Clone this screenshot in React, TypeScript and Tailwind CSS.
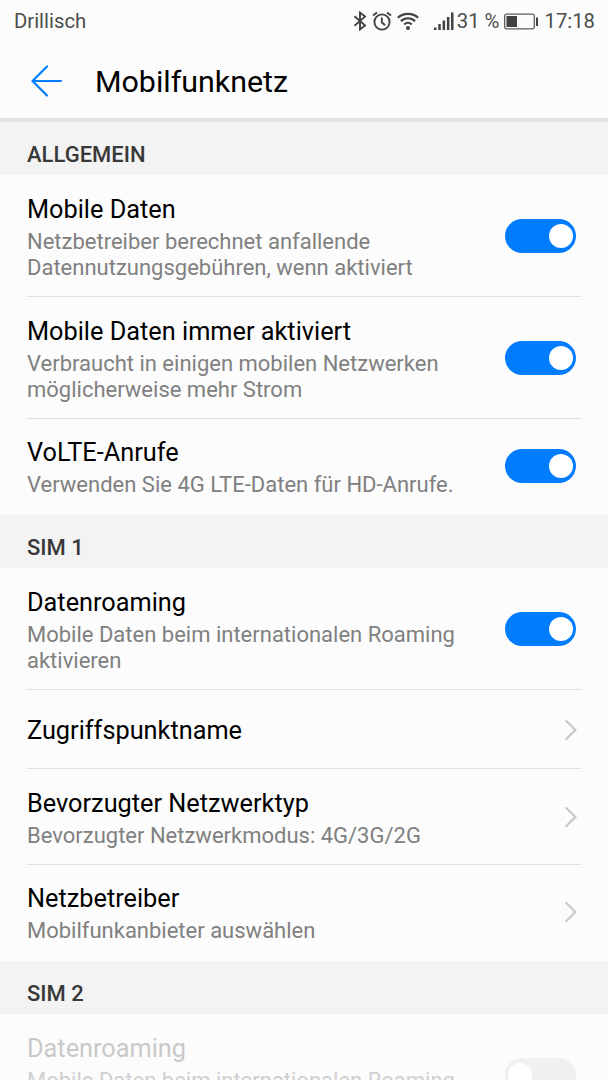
import { useState } from 'react'
import { clsx } from 'clsx'

interface RowProps {
  title: string
  summary?: string
  kind: 'switch' | 'link'
  on?: boolean
  disabled?: boolean
  last?: boolean
}

interface Section {
  title: string
  rows: RowProps[]
}

const sections: Section[] = [
  {
    title: 'ALLGEMEIN',
    rows: [
      { title: 'Mobile Daten', summary: 'Netzbetreiber berechnet anfallende\nDatennutzungsgebühren, wenn aktiviert', kind: 'switch', on: true },
      { title: 'Mobile Daten immer aktiviert', summary: 'Verbraucht in einigen mobilen Netzwerken\nmöglicherweise mehr Strom', kind: 'switch', on: true },
      { title: 'VoLTE-Anrufe', summary: 'Verwenden Sie 4G LTE-Daten für HD-Anrufe.', kind: 'switch', on: true },
    ],
  },
  {
    title: 'SIM 1',
    rows: [
      { title: 'Datenroaming', summary: 'Mobile Daten beim internationalen Roaming\naktivieren', kind: 'switch', on: true },
      { title: 'Zugriffspunktname', kind: 'link' },
      { title: 'Bevorzugter Netzwerktyp', summary: 'Bevorzugter Netzwerkmodus: 4G/3G/2G', kind: 'link' },
      { title: 'Netzbetreiber', summary: 'Mobilfunkanbieter auswählen', kind: 'link' },
    ],
  },
  {
    title: 'SIM 2',
    rows: [
      { title: 'Datenroaming', summary: 'Mobile Daten beim internationalen Roaming\naktivieren', kind: 'switch', disabled: true },
    ],
  },
]

function StatusBar() {
  return (
    <div className="flex h-[43px] shrink-0 items-center justify-between pr-[13px] pl-[14px] text-[20.3px] text-[#4d4d4d]">
      <span>Drillisch</span>
      <div className="flex items-center">
        {/* Bluetooth */}
        <svg width="14" height="20" viewBox="0 0 14 20" fill="none" stroke="#424242" strokeWidth="1.9" className="mr-[5px] mb-[2px]">
          <path d="M1.5 5.2 12 14.4 7 18.4V1.6l5 4L1.5 14.8" />
        </svg>
        {/* Alarm */}
        <svg width="20" height="20" viewBox="0 0 20 20" fill="none" stroke="#424242" strokeWidth="1.9" className="mr-[5px] mb-[2px]">
          <circle cx="10" cy="11" r="7.6" />
          <path d="M9.8 6.5v4.8l3.2 3M1 4.6l4-3.2M19 4.6l-4-3.2" />
        </svg>
        {/* WLAN */}
        <svg width="22" height="20" viewBox="0 0 22 20" fill="none" stroke="#424242" strokeWidth="2.1" className="mr-[15px] mb-[2px]">
          <path d="M.8 6.8c5.6-5.2 14.8-5.2 20.4 0M3.9 10.3c4.1-4 10.1-4 14.2 0M7.2 13.5c2.3-2.1 5.3-2.1 7.6 0" />
          <circle cx="11" cy="17" r="2" fill="#424242" stroke="none" />
        </svg>
        {/* Signal */}
        <svg width="20" height="20" viewBox="0 0 20 20" fill="#424242" className="mr-[3px] mb-[2px]">
          <path d="M0 16.5h2.5V19H0zM4.300 13h2.500v6H4.300zM8.600 9.500h2.500V19H8.600zM12.900 6h2.500v13h-2.500zM17 1.500h2.500V19H17z" />
        </svg>
        <span>31 %</span>
        {/* Battery */}
        <svg width="35" height="18" viewBox="0 0 35 18" className="mx-[5px]">
          <rect x=".7" y="1.2" width="29.6" height="14.6" rx="1.8" fill="none" stroke="#5c5c5c" strokeWidth="1.3" />
          <path d="M2.5 3H13v11H2.500zM32 4.500h2V13h-2z" fill="#424242" />
        </svg>
        <span>17:18</span>
      </div>
    </div>
  )
}

function Switch({ initial, disabled }: { initial: boolean; disabled?: boolean }) {
  const [on, setOn] = useState(initial)

  return (
    <button
      role="switch"
      aria-checked={on}
      disabled={disabled}
      onClick={() => setOn(!on)}
      className={clsx(
        'mr-[5px] flex h-[34px] w-[71px] shrink-0 items-center rounded-full px-[3px]',
        on ? 'justify-end bg-[#007dff]' : 'justify-start bg-[#eff1f1]'
      )}
    >
      <span className="size-6 rounded-full bg-white" />
    </button>
  )
}

function Row({ title, summary, kind, on, disabled, last }: RowProps) {
  const compact = last && !disabled

  return (
    <div
      className={clsx(
        'mx-[27px] flex shrink-0 items-center justify-between',
        !last && 'border-b border-[#dfdfdf]',
        !summary && 'h-[79px]'
      )}
    >
      <div className={clsx(!summary && 'pt-[3px]', summary && (compact ? 'pt-[19px] pb-[17px]' : 'pt-5 pb-[15px]'))}>
        <div className={clsx('text-[25.3px] leading-[30px]', disabled ? 'text-[#c9c9c9]' : 'text-black')}>{title}</div>
        {summary && (
          <div className={clsx('mt-1 text-[22px] leading-[26px] whitespace-pre-line', disabled ? 'text-[#cfcfcf]' : 'text-[#808080]')}>
            {summary}
          </div>
        )}
      </div>
      <div className={clsx('flex shrink-0', compact ? 'mb-0.5' : 'mt-px')}>
        {kind === 'switch' ? (
          <Switch initial={!!on} disabled={disabled} />
        ) : (
          <svg width="14" height="24" viewBox="0 0 14 24" fill="none" stroke="#c8c8c8" strokeWidth="2.2" className="mr-[3px]">
            <path d="M1.6 2.2l9.8 9.8-9.8 9.8" />
          </svg>
        )}
      </div>
    </div>
  )
}

export default function App() {
  return (
    <div className="flex h-[1080px] w-[608px] flex-col overflow-hidden bg-[#fcfcfc] font-['Roboto',sans-serif]">
      <StatusBar />
      <header className="flex h-[79px] shrink-0 items-center border-b-4 border-[#e2e2e2] pl-[31px]">
        <svg width="32" height="32" viewBox="0 0 32 32" fill="none" stroke="#007dff" strokeWidth="2.2" strokeLinecap="round" strokeLinejoin="round">
          <path d="M30 16H1.5M16 1.5 1.5 16 16 30.5" />
        </svg>
        <h1 className="mt-[3px] ml-[32px] text-[30.4px] leading-9 text-black">Mobilfunknetz</h1>
      </header>
      {sections.map((section) => (
        <section key={section.title} className="shrink-0">
          <h2 className="flex h-[53px] items-end bg-[#f3f3f3] pb-[7px] pl-[27px] text-[22px] leading-[26px] font-medium text-[#383838]">
            {section.title}
          </h2>
          {section.rows.map((row, i) => (
            <Row key={row.title} {...row} last={i === section.rows.length - 1} />
          ))}
        </section>
      ))}
    </div>
  )
}
